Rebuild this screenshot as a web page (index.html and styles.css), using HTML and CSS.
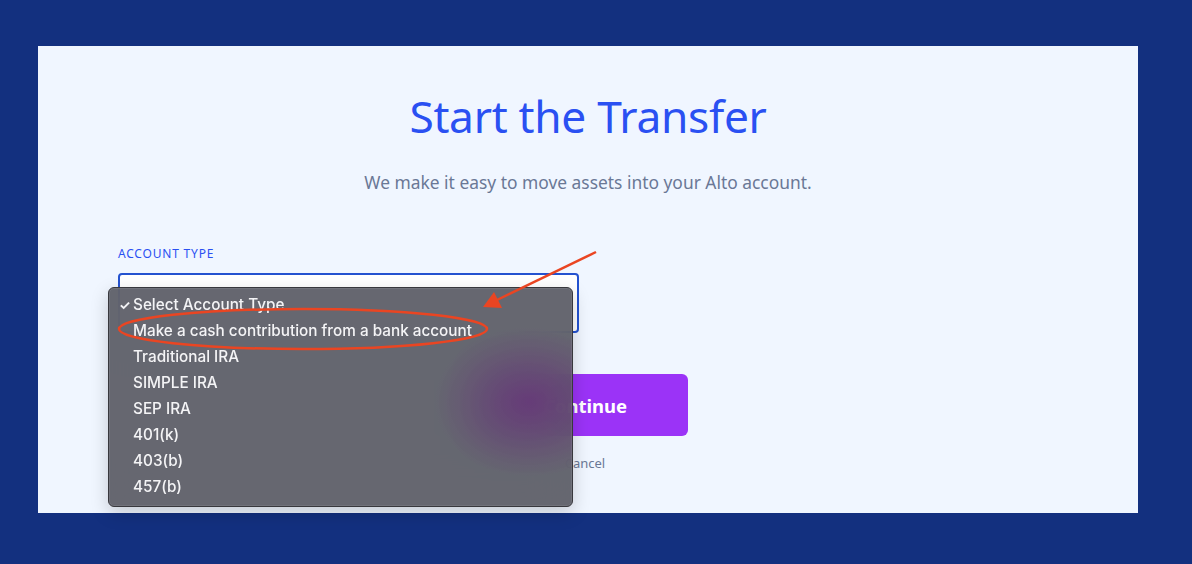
FILE: index.html
```html
<!DOCTYPE html>
<html lang="en">
<head>
  <meta charset="UTF-8">
  <meta name="viewport" content="width=device-width, initial-scale=1.0">
  <title>Start the Transfer</title>
  <link rel="stylesheet" href="styles.css">
</head>
<body>
  <div class="panel">
    <h1>Start the Transfer</h1>
    <p class="lead">We make it easy to move assets into your Alto account.</p>

    <form class="transfer-form">
      <label for="accountType">Account Type</label>
      <div class="select-box" id="accountType"></div>

      <div class="actions">
        <button type="button" class="btn-continue">Continue</button>
        <a href="#" class="cancel">Cancel</a>
      </div>

      <ul class="menu">
        <li class="checked">Select Account Type</li>
        <li>Make a cash contribution from a bank account</li>
        <li>Traditional IRA</li>
        <li>SIMPLE IRA</li>
        <li>SEP IRA</li>
        <li>401(k)</li>
        <li>403(b)</li>
        <li>457(b)</li>
      </ul>
    </form>
  </div>

  <!-- annotation drawn on top of the screenshot -->
  <svg class="markup" width="1192" height="564" viewBox="0 0 1192 564">
    <ellipse cx="303" cy="329" rx="184" ry="20" fill="none" stroke="#ea4522" stroke-width="2.5"/>
    <line x1="596" y1="252" x2="497" y2="300" stroke="#ea4522" stroke-width="2.5"/>
    <polygon points="483,307 494,292 502,308" fill="#ea4522"/>
  </svg>
</body>
</html>
```

FILE: styles.css
```css
body {
  margin: 0;
  padding: 46px 54px 0 38px;
  height: 564px;
  box-sizing: border-box;
  background-color: #13307f;
  font-family: "Open Sans", "Noto Sans", sans-serif;
  overflow: hidden;
}
.panel {
  background-color: #f0f6ff;
  height: 467px;
  padding-top: 42px;
  box-sizing: border-box;
}
h1 {
  margin: 0;
  text-align: center;
  font-family: "Noto Sans", sans-serif;
  font-weight: 400;
  font-size: 44.3px;
  line-height: 56px;
  color: #2a50f2;
  letter-spacing: -0.3px;
}
.lead {
  margin: 25px 0 0;
  text-align: center;
  font-family: "Noto Sans", sans-serif;
  font-size: 17.4px;
  line-height: 26px;
  color: #6a7896;
}
.transfer-form {
  position: relative;
  width: 570px;
  margin: 51px 0 0 80px;
}
label {
  display: block;
  font-family: "Noto Sans", sans-serif;
  font-size: 12px;
  line-height: 16px;
  letter-spacing: 0.8px;
  text-transform: uppercase;
  color: #2a50f2;
  margin-bottom: 11px;
}
.select-box {
  width: 461px;
  height: 60px;
  box-sizing: border-box;
  background: #fff;
  border: 2px solid #2452d0;
  border-radius: 4px;
}
.actions {
  display: flex;
  flex-direction: column;
  align-items: center;
  width: 206px;
  margin: 41px 0 0 auto;
}
.btn-continue {
  width: 100%;
  height: 62px;
  border: none;
  border-radius: 6px;
  background-color: #9b33f7;
  color: #fff;
  font-family: "Noto Sans", sans-serif;
  font-weight: 700;
  font-size: 18.5px;
  cursor: pointer;
}
.cancel {
  margin-top: 18px;
  font-family: "Noto Sans", sans-serif;
  font-size: 13px;
  color: #6a7896;
  text-decoration: none;
}
.menu {
  position: absolute;
  left: -10px;
  top: 41px;
  width: 465px;
  height: 220px;
  box-sizing: border-box;
  margin: 0;
  padding: 4px 0 0;
  list-style: none;
  background-color: rgba(92, 94, 103, 0.94);
  background-image: radial-gradient(ellipse 95px 75px at 420px 114px, rgba(105, 40, 125, 0.62), rgba(105, 40, 125, 0));
  backdrop-filter: blur(22px);
  border: 1px solid #38383d;
  border-radius: 6px;
  box-shadow: 0 6px 18px rgba(0, 0, 0, 0.18), inset 0 0 0 1px rgba(255, 255, 255, 0.08);
}
.menu li {
  position: relative;
  padding-left: 24px;
  height: 26px;
  line-height: 26px;
  font-family: Inter, "Liberation Sans", sans-serif;
  font-size: 15.3px;
  font-weight: 500;
  color: #f4f4f6;
}
.menu li.checked::before {
  content: "\2713";
  position: absolute;
  left: 10px;
  font-size: 13px;
  font-weight: 700;
}
.markup {
  position: absolute;
  left: 0;
  top: 0;
  pointer-events: none;
}
```
